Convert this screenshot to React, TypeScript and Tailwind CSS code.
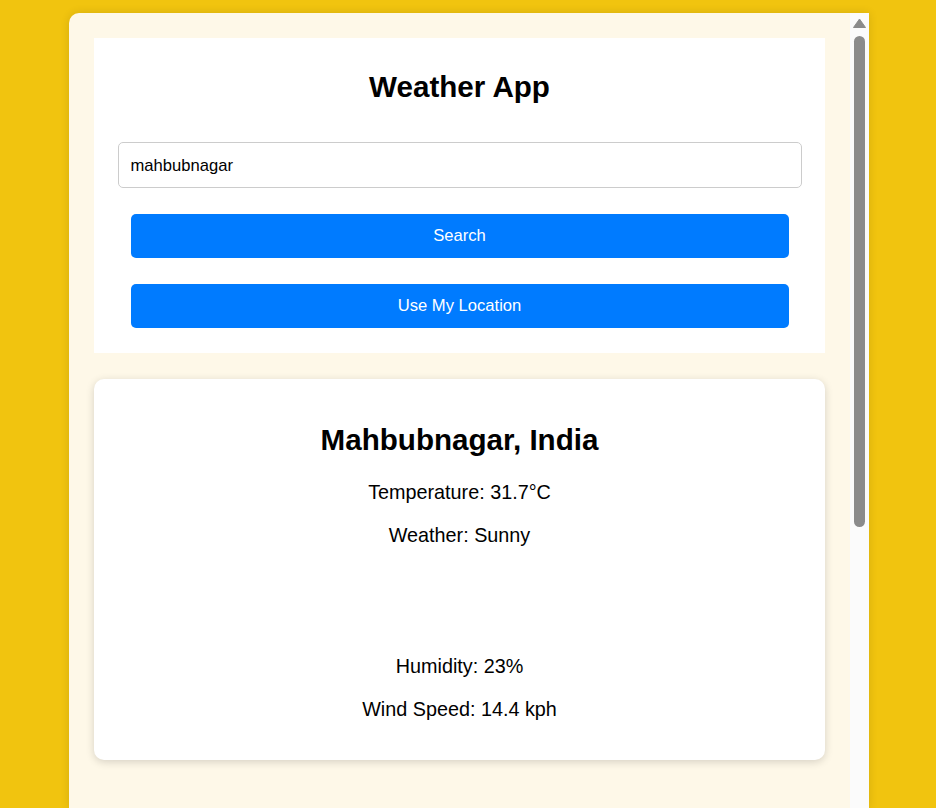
import React from "react";

// Weather lookup screen: search card on top, current conditions card below.
const current = {
  place: "Mahbubnagar, India",
  temp: "31.7°C",
  condition: "Sunny",
  humidity: "23%",
  wind: "14.4 kph",
};

export default function App() {
  return (
    <div className="h-screen overflow-hidden bg-[#f1c40f] font-['Liberation_Sans',Arial,sans-serif] text-black">
      <div className="ml-[69px] mt-[13px] flex h-[795px] w-[800px] overflow-hidden rounded-tl-[10px] bg-[#fef8e8] shadow-[0_0_10px_rgba(0,0,0,0.12)]">
        <div className="flex-1 px-[25px] pt-[25px]">
          <SearchCard />
          <WeatherCard />
        </div>
        <Scrollbar />
      </div>
    </div>
  );
}

function Scrollbar() {
  return (
    <div className="flex w-[19px] shrink-0 flex-col items-center bg-[#fbfbfb]">
      <div className="flex h-[19px] items-center justify-center">
        <svg width="13" height="10" viewBox="0 0 13 10">
          <path d="M6.5 1 L12.5 9.5 L0.5 9.5 Z" fill="#8b8b8b" stroke="#8b8b8b" strokeWidth="1" strokeLinejoin="round" />
        </svg>
      </div>
      <div className="mt-[4px] h-[491px] w-[11px] rounded-full bg-[#8b8b8b]" />
    </div>
  );
}

function SearchCard() {
  return (
    <div className="flex flex-col items-center bg-white pb-[25px] pt-[32px]">
      <h1 className="h-[34px] text-[29.6px] font-bold leading-[34px]">Weather App</h1>
      <input
        defaultValue="mahbubnagar"
        className="mt-[38px] h-[46px] w-[684px] rounded-[5px] border border-[#cccccc] bg-white px-[12px] pt-[1px] text-[16.6px] text-black outline-none"
      />
      <button className="mt-[26px] h-[44px] w-[658px] rounded-[5px] bg-[#007bff] pt-[1px] text-[16.6px] text-white">
        Search
      </button>
      <button className="mt-[26px] h-[44px] w-[658px] rounded-[5px] bg-[#007bff] pt-[1px] text-[16.6px] text-white">
        Use My Location
      </button>
    </div>
  );
}

function WeatherCard() {
  return (
    <div className="mt-[26px] flex flex-col items-center rounded-[10px] bg-white pb-[39px] pt-[44px] shadow-[0_2px_8px_rgba(0,0,0,0.16)]">
      <h2 className="h-[34px] text-[29.6px] font-bold leading-[34px]">{current.place}</h2>
      <p className="mt-[24px] text-[19.8px] leading-[23px]">Temperature: {current.temp}</p>
      <p className="mt-[20px] text-[19.8px] leading-[23px]">Weather: {current.condition}</p>
      {/* condition icon slot (image not loaded) */}
      <div className="mt-[20px] h-[68px] w-[64px]" />
      <p className="mt-[20px] text-[19.8px] leading-[23px]">Humidity: {current.humidity}</p>
      <p className="mt-[20px] text-[19.8px] leading-[23px]">Wind Speed: {current.wind}</p>
    </div>
  );
}
